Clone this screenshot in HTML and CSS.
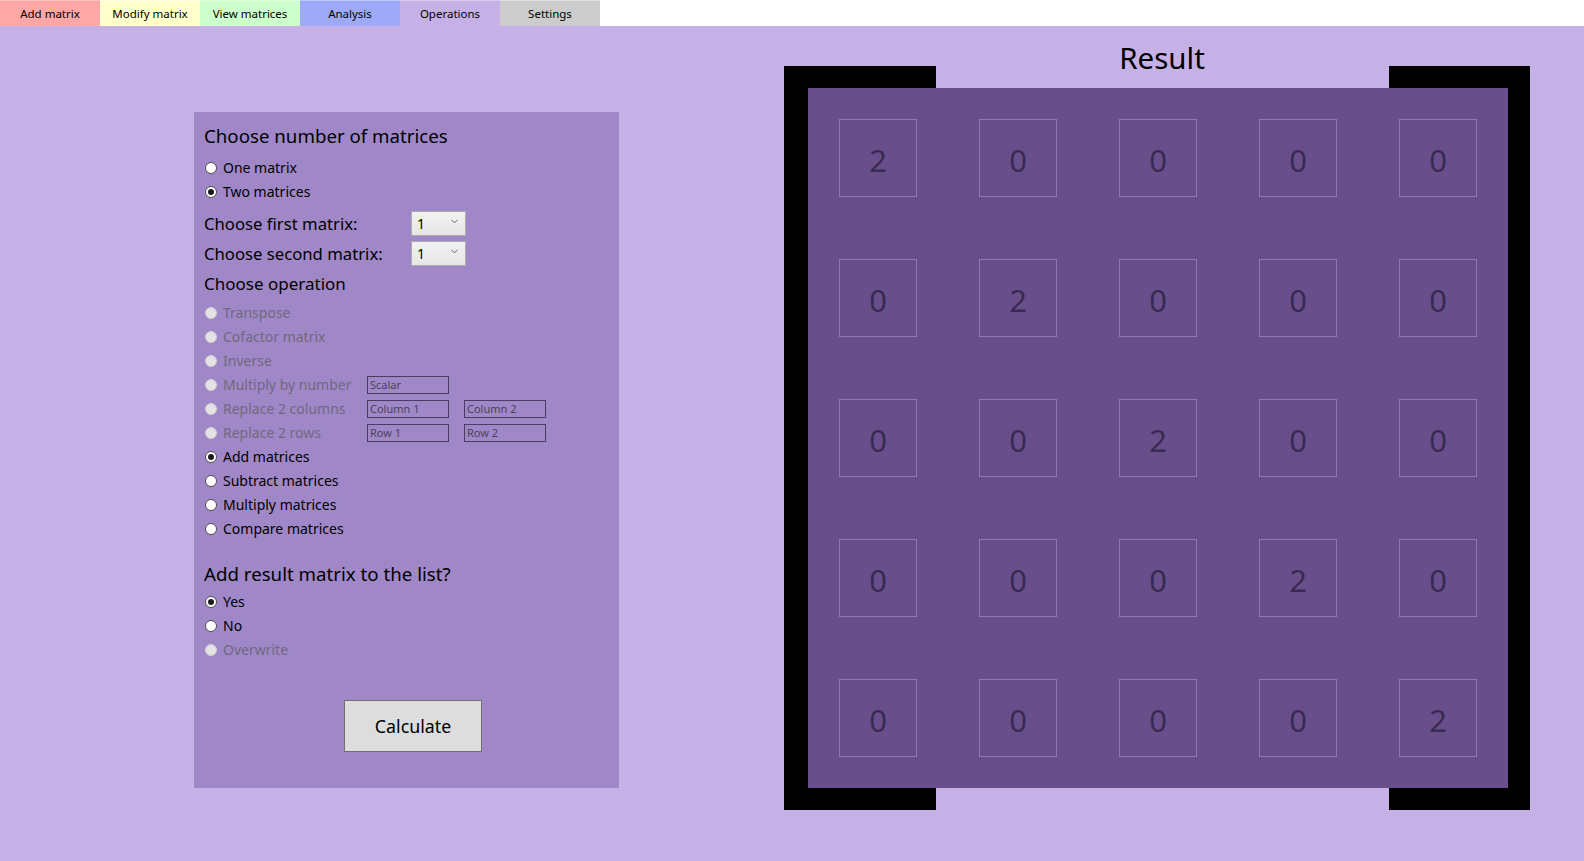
FILE: index.html
```html
<!DOCTYPE html>
<html lang="en">
<head>
<meta charset="utf-8">
<title>Matrix calculator - Operations</title>
<link rel="stylesheet" href="styles.css">
</head>
<body>
<nav class="tabbar">
  <div class="tab tab-add">Add matrix</div>
  <div class="tab tab-modify">Modify matrix</div>
  <div class="tab tab-view">View matrices</div>
  <div class="tab tab-analysis">Analysis</div>
  <div class="tab tab-operations">Operations</div>
  <div class="tab tab-settings">Settings</div>
</nav>
<main class="content">
  <section class="panel">
    <h2 class="heading big first">Choose number of matrices</h2>
    <div class="radio-row"><span class="radio"></span><span class="label">One matrix</span></div>
    <div class="radio-row"><span class="radio checked"></span><span class="label">Two matrices</span></div>

    <div class="select-row first-select">
      <span class="select-label">Choose first matrix:</span>
      <div class="combo"><span>1</span><svg class="chev" width="7" height="5" viewBox="0 0 7 5"><polyline points="0.5,0.8 3.5,3.8 6.5,0.8" fill="none" stroke="#606060" stroke-width="1"/></svg></div>
    </div>
    <div class="select-row">
      <span class="select-label">Choose second matrix:</span>
      <div class="combo"><span>1</span><svg class="chev" width="7" height="5" viewBox="0 0 7 5"><polyline points="0.5,0.8 3.5,3.8 6.5,0.8" fill="none" stroke="#606060" stroke-width="1"/></svg></div>
    </div>

    <h2 class="heading small op-heading">Choose operation</h2>
    <div class="ops">
      <div class="radio-row disabled"><span class="radio"></span><span class="label">Transpose</span></div>
      <div class="radio-row disabled"><span class="radio"></span><span class="label">Cofactor matrix</span></div>
      <div class="radio-row disabled"><span class="radio"></span><span class="label">Inverse</span></div>
      <div class="radio-row disabled">
        <div class="opt"><span class="radio"></span><span class="label">Multiply by number</span></div>
        <div class="textbox">Scalar</div>
      </div>
      <div class="radio-row disabled">
        <div class="opt"><span class="radio"></span><span class="label">Replace 2 columns</span></div>
        <div class="textbox">Column 1</div>
        <div class="textbox">Column 2</div>
      </div>
      <div class="radio-row disabled">
        <div class="opt"><span class="radio"></span><span class="label">Replace 2 rows</span></div>
        <div class="textbox">Row 1</div>
        <div class="textbox">Row 2</div>
      </div>
      <div class="radio-row"><span class="radio checked"></span><span class="label">Add matrices</span></div>
      <div class="radio-row"><span class="radio"></span><span class="label">Subtract matrices</span></div>
      <div class="radio-row"><span class="radio"></span><span class="label">Multiply matrices</span></div>
      <div class="radio-row"><span class="radio"></span><span class="label">Compare matrices</span></div>
    </div>

    <h2 class="heading big list-heading">Add result matrix to the list?</h2>
    <div class="list-opts">
      <div class="radio-row"><span class="radio checked"></span><span class="label">Yes</span></div>
      <div class="radio-row"><span class="radio"></span><span class="label">No</span></div>
      <div class="radio-row disabled"><span class="radio"></span><span class="label">Overwrite</span></div>
    </div>

    <button class="calc">Calculate</button>
  </section>

  <section class="result-col">
    <h1 class="result-title">Result</h1>
    <div class="bracket">
      <div class="matrix">
        <div class="cell">2</div><div class="cell">0</div><div class="cell">0</div><div class="cell">0</div><div class="cell">0</div>
        <div class="cell">0</div><div class="cell">2</div><div class="cell">0</div><div class="cell">0</div><div class="cell">0</div>
        <div class="cell">0</div><div class="cell">0</div><div class="cell">2</div><div class="cell">0</div><div class="cell">0</div>
        <div class="cell">0</div><div class="cell">0</div><div class="cell">0</div><div class="cell">2</div><div class="cell">0</div>
        <div class="cell">0</div><div class="cell">0</div><div class="cell">0</div><div class="cell">0</div><div class="cell">2</div>
      </div>
    </div>
  </section>
</main>
</body>
</html>
```

FILE: styles.css
```css
* { box-sizing: border-box; }

html, body {
  margin: 0;
  padding: 0;
}

body {
  background: #c5b1e6;
  font-family: "Noto Sans", "Open Sans", sans-serif;
  color: #000;
  width: 1584px;
  height: 861px;
  overflow: hidden;
}

/* ---------- tabs ---------- */
.tabbar {
  display: flex;
  height: 26px;
  background: #ffffff;
}

.tab {
  width: 100px;
  display: flex;
  align-items: center;
  justify-content: center;
  font-size: 11.5px;
  color: #000;
  border-top: 1px solid rgba(255, 255, 255, 0.35);
}

.tab-add { background: #ffa6a6; }
.tab-modify { background: #ffffcc; }
.tab-view { background: #ccffcc; }
.tab-analysis { background: #9eaaf8; }
.tab-operations { background: #c5b1e6; }
.tab-settings { background: #cccccc; }

/* ---------- layout ---------- */
.content {
  display: flex;
  align-items: flex-start;
}

/* ---------- left panel ---------- */
.panel {
  margin-left: 194px;
  margin-top: 86px;
  width: 425px;
  height: 676px;
  background: #a088c8;
  padding: 12px 0 0 10px;
  display: flex;
  flex-direction: column;
  align-items: flex-start;
}

.heading {
  margin: 0;
  font-weight: normal;
  line-height: 24px;
  height: 24px;
  white-space: nowrap;
}

.heading.big { font-size: 18.7px; }
.heading.small { font-size: 17px; }

.radio-row {
  display: flex;
  align-items: center;
  height: 24px;
  font-size: 14px;
  white-space: nowrap;
}

.heading.first + .radio-row { margin-top: 8px; }

.opt {
  display: flex;
  align-items: center;
  width: 163px;
}

.radio {
  width: 12px;
  height: 12px;
  border-radius: 50%;
  background: #ffffff;
  border: 1px solid #4d4d4d;
  margin-left: 1px;
  margin-right: 6px;
  flex: none;
  display: flex;
  align-items: center;
  justify-content: center;
}

.radio.checked::after {
  content: "";
  width: 6px;
  height: 6px;
  border-radius: 50%;
  background: #1a1a1a;
}

.disabled .radio {
  background: #e3e3e3;
  border-color: #cfcfcf;
}

.disabled .label {
  color: #6f6880;
}

.label { line-height: 24px; }

.textbox {
  width: 82px;
  height: 18px;
  border: 1px solid #4b3a62;
  font-size: 11px;
  line-height: 16px;
  padding-left: 2px;
  color: #4b4257;
  margin-right: 15px;
}

.select-row {
  display: flex;
  align-items: center;
  height: 30px;
}

.first-select { margin-top: 4px; }

.select-label {
  width: 207px;
  font-size: 16.7px;
  white-space: nowrap;
}

.combo {
  width: 55px;
  height: 25px;
  border: 1px solid #acacac;
  background: linear-gradient(#f2f2f2, #e6e6e6);
  display: flex;
  align-items: center;
  justify-content: space-between;
  padding: 0 7px 0 5px;
  font-size: 14px;
}

.chev { margin-top: -4px; }

.op-heading { margin-top: 4px; }

.ops { margin-top: 5px; }

.list-heading { margin-top: 21px; }

.list-opts { margin-top: 4px; }

.calc {
  margin-top: 38px;
  margin-left: 140px;
  width: 138px;
  height: 52px;
  background: #dddddd;
  border: 1px solid #707070;
  font-family: inherit;
  font-size: 17.8px;
  color: #000;
  padding: 0;
}

/* ---------- result ---------- */
.result-col {
  margin-left: 165px;
  margin-top: 12px;
  width: 746px;
  display: flex;
  flex-direction: column;
}

.result-title {
  position: relative;
  z-index: 1;
  margin: 0 0 -12px 0;
  padding-left: 10px;
  text-align: center;
  font-weight: normal;
  font-size: 29.5px;
  line-height: 40px;
  height: 40px;
}

.bracket {
  position: relative;
  background: #000;
  padding: 22px 22px 22px 24px;
}

.bracket::before,
.bracket::after {
  content: "";
  position: absolute;
  left: 152px;
  right: 141px;
  height: 22px;
  background: #c5b1e6;
}

.bracket::before { top: 0; }
.bracket::after { bottom: 0; }

.matrix {
  width: 700px;
  height: 700px;
  background: #684f8c;
  display: grid;
  grid-template-columns: repeat(5, 140px);
  grid-template-rows: repeat(5, 140px);
  align-items: center;
  justify-items: center;
}

.cell {
  width: 78px;
  height: 78px;
  border: 1px solid #8f7cac;
  display: flex;
  align-items: center;
  justify-content: center;
  font-size: 31px;
  color: #3a2a52;
  padding-top: 4px;
}
```
